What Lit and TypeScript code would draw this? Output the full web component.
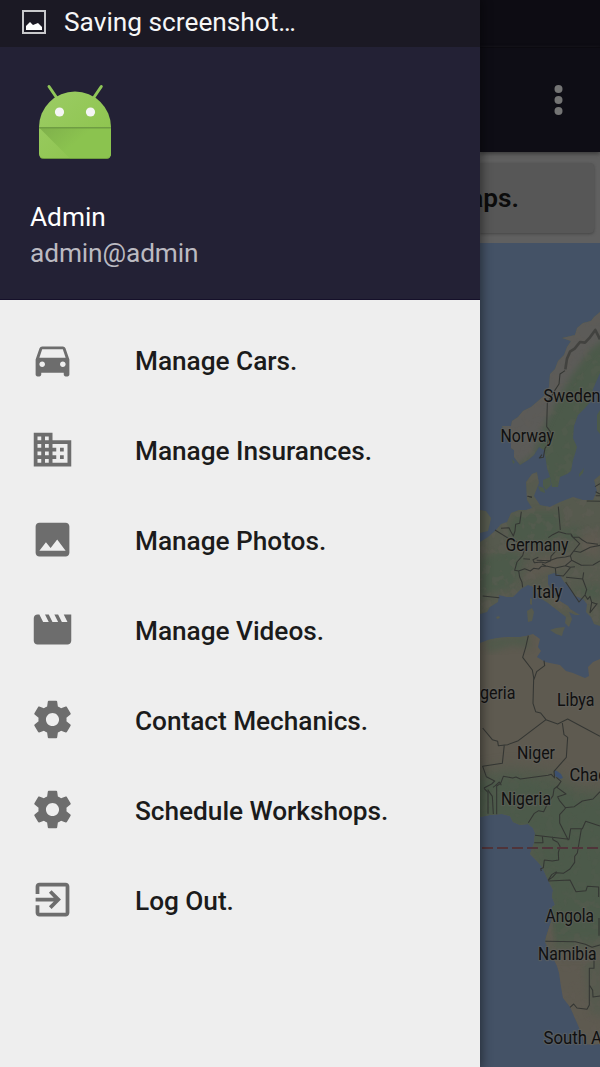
import { LitElement, html, css, svg } from "lit";
import { customElement } from "lit/decorators.js";

const ICONS: Record<string, string> = {
  car: "M18.92 6.01C18.72 5.42 18.16 5 17.5 5h-11c-.66 0-1.21.42-1.42 1.01L3 12v8c0 .55.45 1 1 1h1c.55 0 1-.45 1-1v-1h12v1c0 .55.45 1 1 1h1c.55 0 1-.45 1-1v-8l-2.08-5.99zM6.5 16c-.83 0-1.5-.67-1.5-1.5S5.67 13 6.5 13s1.5.67 1.5 1.5S7.33 16 6.5 16zm11 0c-.83 0-1.5-.67-1.5-1.5s.67-1.5 1.5-1.5 1.5.67 1.5 1.5-.67 1.5-1.5 1.5zM5 11l1.5-4.5h11L19 11H5z",
  building: "M12 7V3H2v18h20V7H12zM6 19H4v-2h2v2zm0-4H4v-2h2v2zm0-4H4V9h2v2zm0-4H4V5h2v2zm4 12H8v-2h2v2zm0-4H8v-2h2v2zm0-4H8V9h2v2zm0-4H8V5h2v2zm10 12h-8v-2h2v-2h-2v-2h2v-2h-2V9h8v10zm-2-8h-2v2h2v-2zm0 4h-2v2h2v-2z",
  photo: "M21 19V5c0-1.100-.9-2-2-2H5c-1.100 0-2 .9-2 2v14c0 1.100.9 2 2 2h14c1.100 0 2-.9 2-2zM8.500 13.500l2.500 3.010L14.500 12l4.500 6H5l3.500-4.500z",
  video: "M18 4l2 4h-3l-2-4h-2l2 4h-3l-2-4H8l2 4H7L5 4H4c-1.100 0-1.990.9-1.990 2L2 18c0 1.100.9 2 2 2h16c1.100 0 2-.9 2-2V4h-4z",
  gear: "M19.430 12.980c.04-.32.07-.64.07-.98s-.03-.66-.07-.98l2.110-1.650c.19-.15.24-.42.12-.64l-2-3.460c-.12-.22-.39-.3-.61-.22l-2.490 1c-.52-.4-1.080-.73-1.690-.98l-.38-2.650C14.460 2.180 14.250 2 14 2h-4c-.25 0-.46.18-.49.42l-.38 2.650c-.61.25-1.170.59-1.690.98l-2.490-1c-.23-.09-.49 0-.61.22l-2 3.460c-.13.22-.07.49.12.64l2.110 1.650c-.04.32-.07.65-.07.98s.03.66.07.98l-2.110 1.650c-.19.15-.24.42-.12.64l2 3.460c.12.22.39.3.61.22l2.490-1c.52.4 1.080.73 1.690.98l.38 2.650c.03.24.24.42.49.42h4c.25 0 .46-.18.49-.42l.38-2.650c.61-.25 1.170-.59 1.690-.98l2.490 1c.23.09.49 0 .61-.22l2-3.460c.12-.22.07-.49-.12-.64l-2.110-1.650zM12 15.500c-1.930 0-3.500-1.570-3.500-3.500s1.570-3.500 3.500-3.500 3.500 1.570 3.500 3.500-1.570 3.500-3.500 3.500z",
  exit: "M10.090 15.590L11.500 17l5-5-5-5-1.410 1.410L12.670 11H3v2h9.670l-2.580 2.590zM19 3H5c-1.110 0-2 .9-2 2v4h2V5h14v14H5v-4H3v4c0 1.100.89 2 2 2h14c1.100 0 2-.9 2-2V5c0-1.100-.9-2-2-2z",
};

const MENU = [
  ["car", "Manage Cars."],
  ["building", "Manage Insurances."],
  ["photo", "Manage Photos."],
  ["video", "Manage Videos."],
  ["gear", "Contact Mechanics."],
  ["gear", "Schedule Workshops."],
  ["exit", "Log Out."],
];

// name, left, baseline, width
const LABELS: [string, number, number, number][] = [
  ["Sweden", 543.5, 402, 57],
  ["Norway", 500.5, 442, 53.5],
  ["Germany", 505.5, 551, 63],
  ["Italy", 532.5, 598, 30],
  ["Algeria", 465.5, 699, 50],
  ["Libya", 557, 706, 37.5],
  ["Niger", 517, 759, 38],
  ["Chad", 569.5, 780.5, 38],
  ["Nigeria", 501, 804.5, 50],
  ["Angola", 545.5, 922, 48.5],
  ["Namibia", 538, 960, 58.5],
  ["South Africa", 543.5, 1044, 92],
];

@customElement("world-map")
class WorldMap extends LitElement {
  static styles = css`
    :host { display: block; overflow: hidden; background: #445266; }
    .map { display: block; width: 120px; height: 824px; }
    .tan { fill: #5e5a50; }
    .mid { fill: #565a4e; }
    .green { fill: #4c5a4a; }
    .pale { fill: #5c5b58; }
    .lake { fill: #3d506e; }
    .border { fill: none; stroke: #343633; stroke-width: 3.2; stroke-linejoin: round; }
    .equator { stroke: #50343a; stroke-width: 2; stroke-dasharray: 11 4; }
    .label {
      font: 400 17.5px Roboto, sans-serif; fill: #101010;
      stroke: #62625e; stroke-opacity: 0.6; stroke-width: 2.4; stroke-linejoin: round; paint-order: stroke;
    }
  `;

  render() {
    return html`<svg class="map" viewBox="480 243 120 824">
      <defs>
        <clipPath id="africa"><path d="M480 643L488 640 497 638 507 637 520 637 526 636 533 634 540 639 538 647 541 651 537 657 545 662 560 665 566 671 573 673 585 678 589 676 588 667 593 662 600 659V1044L592 1045 585 1044 580 1030 577 1023 570 1007 563 998 561 987 559 973 557 966 553 958 549 950 545 942 546 937 549 928 552 919 552 907 555 905 552 897 553 890 548 880 542 867 537 861 530 854 534 843 535 833 533 828 528 824 520 825 513 822 510 816 502 814 490 815 480 817Z"/></clipPath>
        <clipPath id="north"><path d="M600 312L594 317 591 321 583 323 577 328 575 335 562 338 571 341 567 347 564 355 558 361 555 369 550 374 549 387 545 395 538 401 531 407 523 411 518 417 512 421 511 426 502 426 505 433 511 439 511 448 514 450 514 457 520 465 528 460 534 455 539 447 544 450 546 461 547 468 550 477 552 487 558 487 560 477 567 474 571 471 573 460 575 454 577 447 573 438 574 426 578 415 585 408 592 400 593 389 600 373Z"/></clipPath>
        <clipPath id="europe"><path d="M480 542L488 537 496 530 501 524 507 522 511 513 519 510 526 510 532 508 527 500 526 482 532 474 537 472 538 478 539 483 537 488 534 496 540 505 550 507 560 502 573 497 583 500 593 500 597 491 594 480 600 475V626L594 624 591 617 586 612 587 604 583 599 575 596 570 588 564 582 560 575 554 573 548 575 548 584 554 594 558 600 568 606 570 609 580 615 575 615 569 612 572 619 569 627 565 623 566 617 557 610 548 603 540 598 534 587 528 585 521 589 513 597 507 597 499 595 498 602 490 607 487 612 480 614Z"/></clipPath>
        <filter id="grain" x="0" y="0" width="100%" height="100%" color-interpolation-filters="sRGB">
          <feTurbulence type="fractalNoise" baseFrequency="0.11" numOctaves="3" seed="4"/>
          <feColorMatrix values="0 0 0 0 .39 0 0 0 0 .37 0 0 0 0 .34 8 0 0 0 -4.200"/>
        </filter>
        <filter id="soft" color-interpolation-filters="sRGB"><feGaussianBlur stdDeviation="3"/></filter>
        <filter id="wide" x="-30%" y="-30%" width="160%" height="160%" color-interpolation-filters="sRGB"><feGaussianBlur stdDeviation="8"/></filter>
      </defs>

      <g clip-path="url(#north)">
        <rect class="green" x="480" y="300" width="120" height="200"/>
        <path class="pale" filter="url(#soft)" d="M495 405L540 395 550 300H610V335L590 350 572 375 556 402 542 430 533 455 510 470Z"/>
        <rect x="500" y="300" width="100" height="190" filter="url(#grain)" opacity="0.2"/>
      </g>
      <path class="green" d="M543 480l7-3 1 8-5 5-3-4zM579 474l5-6-1 5-4 4zM597 415l3-5v24l-3-4zM538 486l6 2 1 5-5-2zM512 459l3 3-2 2z"/>
      <path class="mid" d="M480 510l6 1 5 7-1 5-2 8-8 2z"/>
      <g clip-path="url(#europe)">
        <rect class="mid" x="480" y="470" width="120" height="165"/>
        <path class="green" filter="url(#soft)" d="M517 512h43l-2 27-38 7-13-15zM480 560l25-10 18 7-10 30-33 8zM560 530l15-3 15 8-25 6zM570 590l30-5v15z"/>
        <path class="tan" filter="url(#soft)" d="M532 560l25-5 20 4-30 14-22 8zM580 535l20-6v29l-19-6zM540 580l15 15 20 15-20-3z"/>
        <rect x="480" y="470" width="120" height="160" filter="url(#grain)" opacity="0.32"/>
      </g>
      <path class="mid" d="M550 630l6-2 9-1-2 5-1 4-6-2zM527 611l5-3 2 4-2 9-4 1zM530 598l2 1v6l-2-1zM496 617l3-1 1 2-3 1z"/>

      <g clip-path="url(#africa)">
        <rect class="tan" x="480" y="630" width="120" height="420"/>
        <path class="green" filter="url(#soft)" d="M484 638l44-4 3 14-20-2-22 7z" opacity="0.7"/>
        <path class="green" filter="url(#wide)" d="M460 778L510 770 550 775 580 790 625 795V945L540 948V880L520 840 460 820Z"/>
        <path class="tan" filter="url(#soft)" d="M540 915l11 0 4 30-8 5z"/>
        <path class="mid" filter="url(#soft)" d="M583 962l22-4v60l-15-5z"/>
        <rect x="480" y="900" width="120" height="145" filter="url(#grain)" opacity="0.22"/>
        <rect x="480" y="770" width="120" height="130" filter="url(#grain)" opacity="0.12"/>
      </g>
      <path class="lake" d="M554 770l3 1 4 3 2 4-3 1-5-3z"/>

      <g class="border" transform="translate(470 240) scale(.33333)">
        <path d="M285 392L270 402 267 432 254 452 232 490 230 560 241 575 232 615 225 625 220 652 208 654 216 644M174 769l12 3M375 740l15-9M377 767h13"/>
        <path d="M390 298L376 270 360 292 345 308 330 306 314 326 300 335 291 356 286 388" stroke-width="8" opacity=".65"/>
      </g>
      <g class="border" transform="translate(470 460) scale(.33333)">
        <path d="M172 109l14 3M154 155l-5 35-12 3-2 20-5 15-8-14-5-11-24 2M75 210l45 28 22 7M265 140l6 70M235 233l13-9 18-9 22 6 15 1 6 10 18 0 10 8 13 8 34 5M205 292l-16 7 4 9 20-2 13 3 16-7 1-13 17-19M303 226l26 25-18 22-10 14-15 4-25 3-23 8-38-1M311 273l20 4 30-15 29-6M301 287l4 14-19 16-30 7-28-6-12-6M305 301l29 15 35-1 21-12M286 317l15 5 14-2M165 262l-7 25-17 19-7 25 12 2 3 18 7 16 2 15M146 333l18-7 17 7 10-8 15 2 8-8 20 0M256 324l2 22 22 2 21-25M288 352l50 5 12 32-5 16-18 21-40-60M345 405l8 13 7-9 5 18 15 5M338 357l3-20M365 427l-5 31 12-15 10-13M38 408l50 5M160 296l20 2M350 123l40 1M377 95l13 7"/>
      </g>
      <g class="border" transform="translate(470 620) scale(.33333)">
        <path d="M175 47L167 82 158 112 187 150 192 178 200 155 224 137 222 122M191 175l-2 75 8 25 15 4 16 20-83 63-32 12-28 3-2-13-16-5-29-35M228 299l35 13 30-15 97 52M277 309l5 35 11 8-4 60-37 42 2 20-10-11-10 3-83 11-13-6-10 3-28-5-8 21-12 8v85M103 374l-6 56-59 9 11 31 25 13-9 9-23 12M42 505l12 12 0 64M53 509l14 20 3 53M69 502l7-5 12-11 6 10M259 472l14 12-12 18 27 20-25 8 5 11 19 23-18 20 0 25 26 52M284 563l29-3 24-17 32-6 21-22M175 608l18-28 13-8 15 3 12-25 16-23 3-20 12-10M195 646l102 12 5-32 35 0 10-22 43 14M217 648l2 20-26 0M247 650l2 9 14 8"/>
      </g>
      <g class="border" transform="translate(470 830) scale(.33333)">
        <path d="M263 37l7 12-5 19 1 22-19 3-24-3-3 23-8 3 2 7M334-3l-12 72-8 10 0 18-14 20-20 13-20-2-13 14-12 8 10-16 15-9M235 153l65-3 18 35 30-3 4-13 34 2v30M387 264v53M226 334l90 1 30 8 20 9 24-7M372 365v50l-14 0v110l-7 13-30-4-10-12-11 10M358 465l10 16 1 20 21-3"/>
      </g>
      <line class="equator" x1="482" y1="848" x2="600" y2="848"/>
      ${LABELS.map(([t, x, y, w]) => svg`<text class="label" x=${x} y=${y} textLength=${w} lengthAdjust="spacingAndGlyphs">${t}</text>`)}
    </svg>`;
  }
}

@customElement("app-root")
class AppRoot extends LitElement {
  static styles = css`
    :host {
      display: grid; grid-template: 1067px / 480px 120px; width: 600px; height: 1067px;
      overflow: hidden; font-family: Roboto, sans-serif; background: #606060;
    }
    .drawer {
      grid-area: 1 / 1; z-index: 1; display: flex; flex-direction: column; background: #eee;
      box-shadow: 0 0 10px 2px rgba(0, 0, 0, 0.45);
    }
    .status {
      box-sizing: border-box; height: 47px; padding: 0 0 3px 22px; background: #1b1924;
      display: flex; align-items: center; gap: 18px; color: #f6f6f7; font-size: 26.25px; white-space: nowrap;
    }
    .status-icon { width: 24px; height: 24px; flex: none; }
    .header {
      box-sizing: border-box; height: 253px; padding: 33px 30px 0; background: #232135;
      border-bottom: 1px solid #15102a; font-size: 26.25px;
    }
    .robot { display: block; width: 90px; height: 90px; }
    .name { margin-top: 29px; line-height: 36px; color: #fff; }
    .mail { line-height: 36px; color: #bbbac1; letter-spacing: -0.1px; }
    .menu { padding-top: 15px; }
    .item {
      box-sizing: border-box; height: 90px; padding: 0 0 1px 30px; display: flex; align-items: center; gap: 60px;
      color: #1b1b1b; font-size: 26.25px; font-weight: 500; white-space: nowrap;
    }
    .caption { padding-top: 3px; letter-spacing: -0.04px; }
    .icon { width: 45px; height: 45px; fill: #6d6d6d; }
    .screen {
      grid-area: 1 / 2; display: grid; grid-template: 47px 105px 91px 824px / minmax(0, 1fr); min-width: 0;
    }
    .top { background: #0d0c13; }
    .bar {
      background: #0e0d15; box-shadow: 0 2px 4px #3c3c3c; border-top: 1px solid #0b0a10; z-index: 0;
      display: flex; align-items: center; justify-content: flex-end; padding-right: 35px;
    }
    .dots { display: block; width: 13px; height: 34px; fill: #747474; }
    .strip { padding: 11px 6px 10px 0; display: flex; }
    .button {
      flex: 1; display: flex; align-items: center; justify-content: flex-end; padding-right: 75px;
      background: #575757; border-radius: 0 4px 4px 0; box-shadow: 0 1px 3px #444;
      color: #0c0c0c; font-size: 26.25px; font-weight: 600; min-width: 0;
    }
  `;

  render() {
    return html`
      <aside class="drawer">
        <div class="status">
          <svg class="status-icon" viewBox="0 0 24 24">
            <rect x="1" y="1" width="22" height="22" fill="none" stroke="#c9c9cc" stroke-width="2"/>
            <path fill="#fff" d="M4 20v-4l4-4 3 3 5-2 4 4v3z"/>
          </svg>
          <span>Saving screenshot…</span>
        </div>
        <div class="header">
          <svg class="robot" viewBox="30 80 90 90">
            <defs>
              <linearGradient id="body" x1="0" y1="0" x2="1" y2="1">
                <stop offset="0" stop-color="#9ccc65"/><stop offset="1" stop-color="#8bc34a"/>
              </linearGradient>
              <linearGradient id="shade" x1="0" y1="0" x2="1" y2=".5">
                <stop offset="0" stop-color="#7fb04b"/><stop offset=".6" stop-color="#8bc34f"/>
              </linearGradient>
            </defs>
            <path d="M49 86.500l7.500 11M101.300 86.500l-7.500 11" stroke="#8fc658" stroke-width="3" stroke-linecap="round"/>
            <path fill="url(#body)" d="M39 127a36 35.500 0 0 1 72 0v27a4.500 4.500 0 0 1-4.500 4.500h-63a4.500 4.500 0 0 1-4.500-4.500z"/>
            <path fill="url(#shade)" d="M39.500 128h71.500v26a4.500 4.500 0 0 1-4.500 4.500H70z"/>
            <path d="M39 127.800h72" stroke="#6f9d43" stroke-width="1.400"/>
            <path d="M40 157q1 1.500 3.500 1.500h63q2.500 0 3.500-1.500" fill="none" stroke="#6f9d3c" stroke-width=".8"/>
            <circle cx="59.500" cy="112" r="4.600" fill="#f5f5f5"/><circle cx="90.500" cy="112" r="4.600" fill="#f5f5f5"/>
          </svg>
          <div class="name">Admin</div>
          <div class="mail">admin@admin</div>
        </div>
        <nav class="menu">
          ${MENU.map(([icon, label]) => html`<div class="item">
            <svg class="icon" viewBox="0 0 24 24"><path d=${ICONS[icon]}/></svg>
            <span class="caption">${label}</span>
          </div>`)}
        </nav>
      </aside>
      <main class="screen">
        <div class="top"></div>
        <div class="bar">
          <svg class="dots" viewBox="0 0 13 34">
            <circle cx="6.500" cy="6" r="4"/><circle cx="6.500" cy="17" r="4"/><circle cx="6.500" cy="28" r="4"/>
          </svg>
        </div>
        <div class="strip"><div class="button">Maps.</div></div>
        <world-map></world-map>
      </main>
    `;
  }
}
